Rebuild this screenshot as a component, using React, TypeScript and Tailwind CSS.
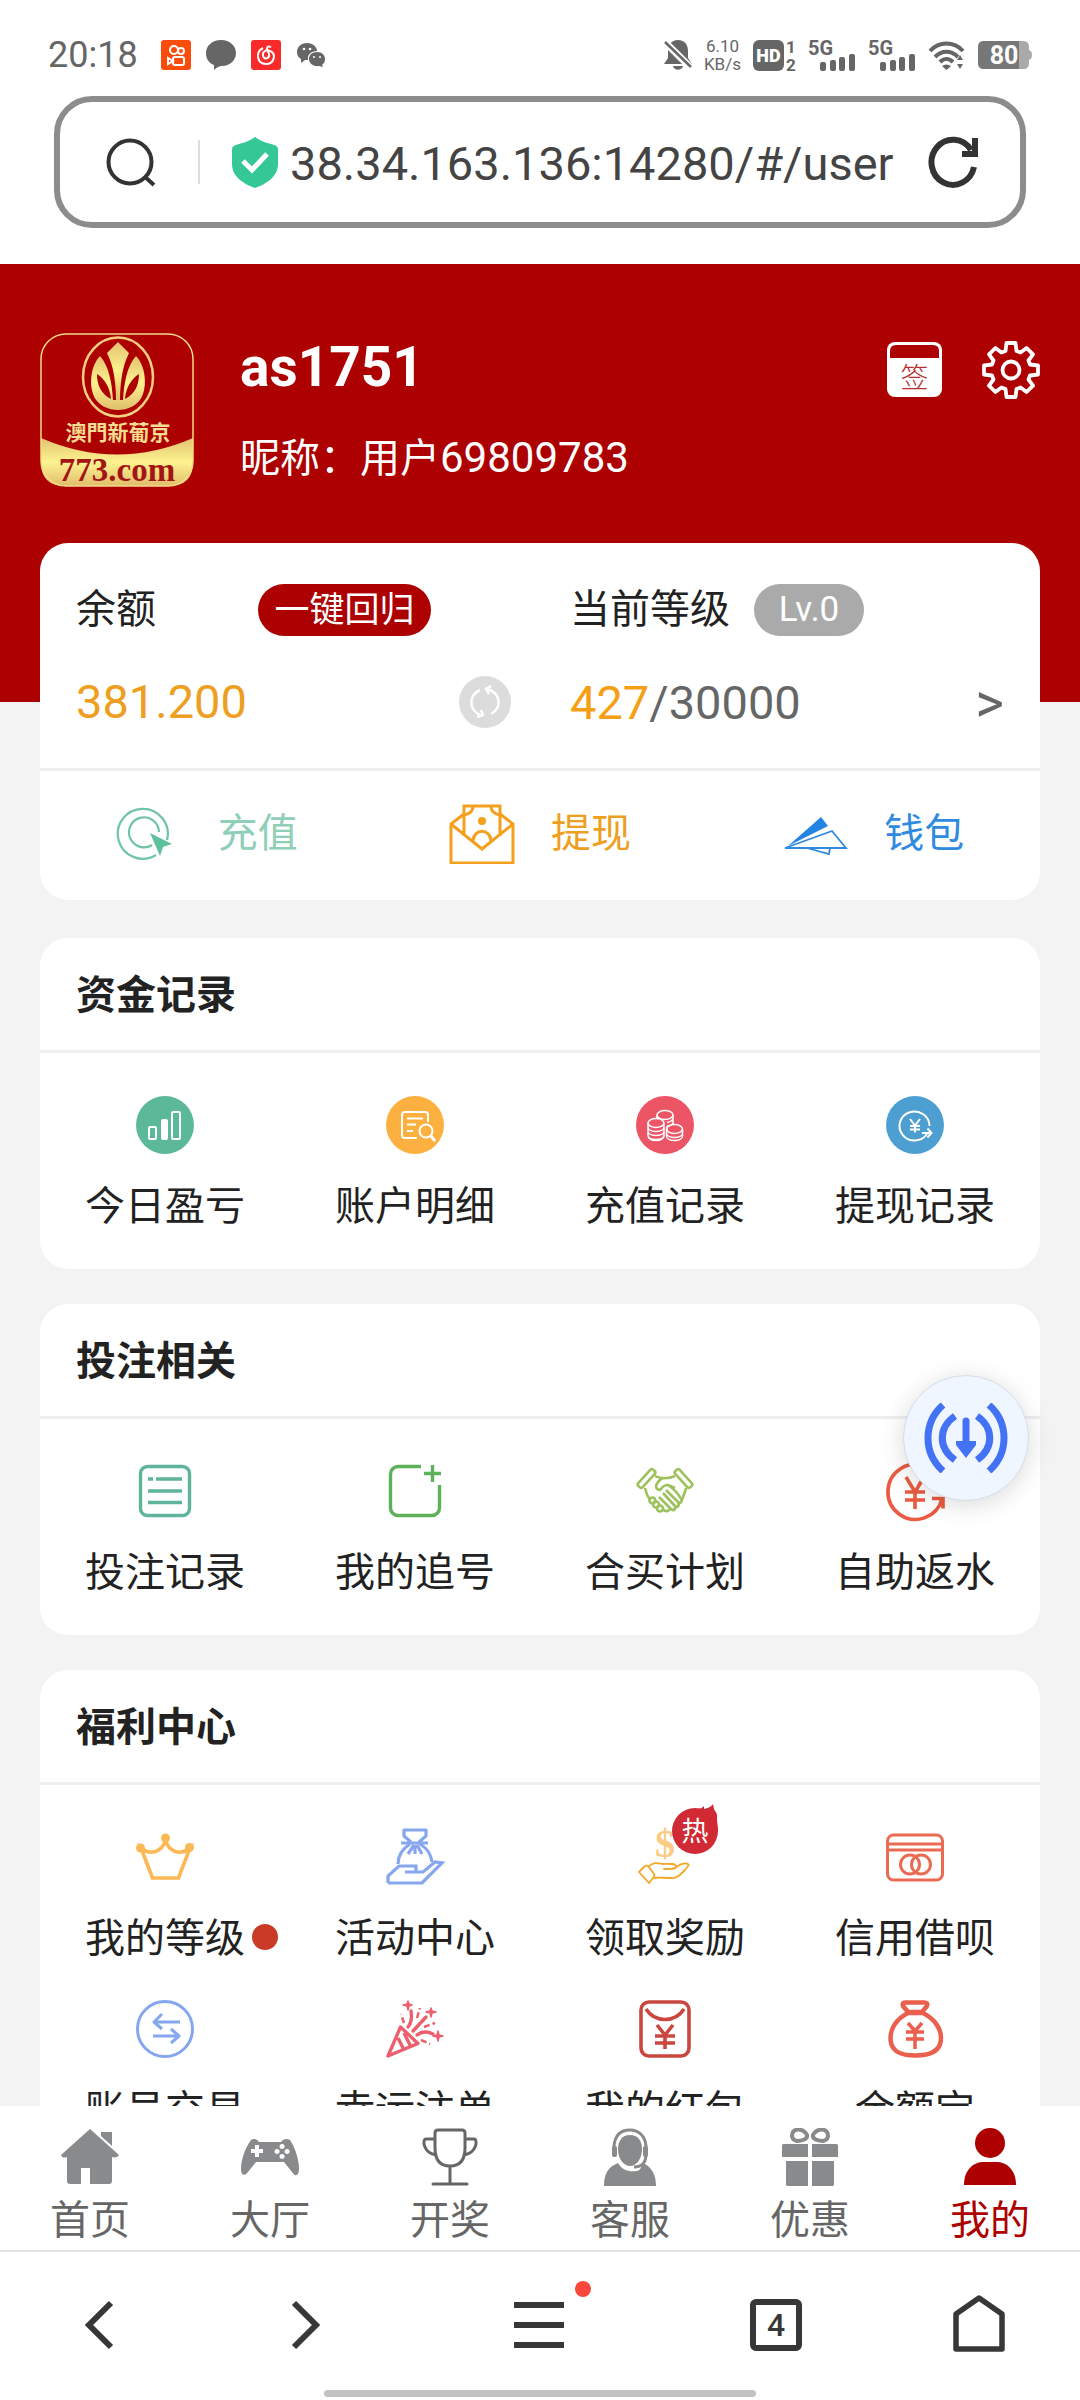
import React from "react";

type IconProps = {
    children: React.ReactNode;
    color?: string;
    className?: string;
    width?: number;
};

type MenuItem = {
    label: string;
    icon: React.ReactNode;
    dot?: boolean;
    hot?: boolean;
};

// All line icons of the menu share a 58 x 58 canvas
const LineIcon: React.FC<IconProps> = ({ children, color, className = "size-[58px] overflow-visible", width = 3 }: IconProps) => (
    <svg
        viewBox="0 0 58 58"
        className={className}
        fill="none"
        stroke={color}
        strokeWidth={width}
        strokeLinejoin="round"
        aria-hidden="true"
    >
        {children}
    </svg>
);

const DiscIcon: React.FC<IconProps> = ({ children, color }: IconProps) => (
    <svg viewBox="0 0 58 58" className="size-[58px]" fill="none" stroke="#fff" strokeWidth="2" aria-hidden="true">
        <circle cx="29" cy="29" r="29" fill={color} stroke="none" />
        {children}
    </svg>
);

const fundItems: Array<MenuItem> = [
    {
        label: "今日盈亏",
        icon: (
            <DiscIcon color="#5bb99a">
                <rect x="13" y="31" width="7" height="12" rx="1" />
                <rect x="25" y="23" width="7" height="21" rx="2" fill="#fff" stroke="none" />
                <rect x="36" y="16" width="8" height="27" rx="1" />
            </DiscIcon>
        ),
    },
    {
        label: "账户明细",
        icon: (
            <DiscIcon color="#fbb03f">
                <path d="M42 26V19a3 3 0 0 0-3-3H19a3 3 0 0 0-3 3v20a3 3 0 0 0 3 3h12M21 22.5h16M21 28.5h9M21 35h6" />
                <circle cx="40" cy="35" r="6.5" />
                <path d="M45 40l4 5" strokeWidth="3" />
            </DiscIcon>
        ),
    },
    {
        label: "充值记录",
        icon: (
            <DiscIcon color="#ec5565">
                <g strokeWidth="1.5">
                    <ellipse cx="29" cy="19" rx="8" ry="4.5" />
                    <path d="M21 19v4M37 19v10M37 23c-1 2-3 3-6 3.5M37 27c-1 2-3 3-6 3" />
                    <ellipse cx="20" cy="27" rx="8" ry="4.5" />
                    <path d="M12 27v13c0 6 16 6 16 0V27M12 31c0 6 16 6 16 0M12 35c0 6 16 6 16 0M12 39c0 6 16 6 16 0" />
                    <ellipse cx="38.5" cy="33" rx="8" ry="4.5" />
                    <path d="M30.5 33v7c0 6 16 6 16 0v-7M30.5 37c0 6 16 6 16 0M31 30v4" />
                </g>
            </DiscIcon>
        ),
    },
    {
        label: "提现记录",
        icon: (
            <DiscIcon color="#4d9fd2">
                <path d="M41 38a15 14.5 0 1 1 2.5-8M36 37h9M41.5 32.5l4 4.5-4 4.5M24 23l5 6.5 5-6.5M29 29.5v7M24 30h10M24 33.5h10" />
            </DiscIcon>
        ),
    },
];

const betItems: Array<MenuItem> = [
    {
        label: "投注记录",
        icon: (
            <LineIcon color="#5fb59b" width={3.4}>
                <rect x="4.5" y="4.5" width="49" height="49" rx="7" />
                <path d="M12 17h5M20 17h26M12 29h34M12 40.5h34" />
            </LineIcon>
        ),
    },
    {
        label: "我的追号",
        icon: (
            <LineIcon color="#5fb05a" width={3.4}>
                <path d="M35 4.5H12a7.500 7.500 0 0 0-7.500 7.500v34a7.500 7.500 0 0 0 7.500 7.500h34a7.500 7.500 0 0 0 7.500-7.500V23M46.500 3v17M38 11.500h17" />
            </LineIcon>
        ),
    },
    {
        label: "合买计划",
        icon: (
            <LineIcon color="#9dc25b" width={2.6}>
                <rect x="7.5" y="5.5" width="6" height="22" rx="2" transform="rotate(42 10.5 16.5)" />
                <rect x="44.5" y="5.5" width="6" height="22" rx="2" transform="rotate(-42 47.5 16.5)" />
                <path d="M19 14c5 3 14 3 20 0M9 26c1 5 2 8 5 12M50 26c-1 5-3 8-4 12" />
                <path d="M27 16c-4 2-6 5-7 8 0 3 3 5 5 3 2-3 4-4 7-4l7 3M32 23c3 2 10 8 13 14 2 3-1 5-3 3L30 28M42 40c2 4-1 6-3 4L27 31M39 44c1 4-2 5-4 3L23 35M34 46c-1 4-5 4-7 1" />
                <circle cx="16.5" cy="38.5" r="3" />
                <circle cx="20" cy="42.5" r="3" />
                <circle cx="24" cy="46.5" r="3" />
            </LineIcon>
        ),
    },
    {
        label: "自助返水",
        icon: (
            <LineIcon color="#ea5b42" width={3.6}>
                <path d="M56 37A27.5 27.5 0 1 1 56.5 25M46 36.5h11v10M20 15l9 15 9-15M29 30v17M19 30h20M19 38h20" strokeLinejoin="miter" />
            </LineIcon>
        ),
    },
];

const welfareItems: Array<MenuItem> = [
    {
        label: "我的等级",
        dot: true,
        icon: (
            <LineIcon color="#fbb955" width={3.6}>
                <path d="M5 20l11.500 30h26L54 20c-10 8-21 4-24.500-8C26 24 15 28 5 20z" strokeLinejoin="miter" />
                <g fill="#fbb955" stroke="none">
                    <circle cx="4.5" cy="20" r="4.5" />
                    <circle cx="29.5" cy="10" r="4.5" />
                    <circle cx="53.5" cy="19.5" r="4.5" />
                </g>
            </LineIcon>
        ),
    },
    {
        label: "活动中心",
        icon: (
            <LineIcon color="#86a6ee" width={3.2}>
                <path d="M25 14L18 8V2h22v6l-7 6M15 15h27M24 16c-8 5-12 11-12 20M34 16c8 5 11 10 12 18M28 17l-6 9M29 17v9M31 17l5 9" />
                <path d="M2 55v-7l11-10h17v6H19M30 44h7l12-10 7 1-20 20H2" strokeLinejoin="miter" />
            </LineIcon>
        ),
    },
    {
        label: "领取奖励",
        hot: true,
        icon: (
            <LineIcon color="#f5a623" width={1.8}>
                <text x="29" y="29" textAnchor="middle" fill="#fbcb85" stroke="none" className="[font-family:'Liberation_Serif',serif] text-[40px] font-bold">
                    $
                </text>
                <path d="M3 44l6-6c2-1 3 0 4 1l5 7c1 2 0 3-1 4l-4 5zM13 38c6-4 8-3 14-2 6 0 12-1 13 2s-4 3-12 3h7c6 0 9-8 17-5 2 1-1 3-3 6-5 5-9 9-14 8-8 0-12-1-17 0" />
            </LineIcon>
        ),
    },
    {
        label: "信用借呗",
        icon: (
            <LineIcon color="#ea6a52">
                <rect x="1.5" y="7" width="55" height="45" rx="6" />
                <path d="M1.5 16h55M1.5 22h55" />
                <circle cx="24" cy="36.5" r="9.5" />
                <circle cx="35" cy="36.5" r="9.5" />
            </LineIcon>
        ),
    },
    {
        label: "账号交易",
        icon: (
            <LineIcon color="#86a6ee">
                <circle cx="29" cy="29" r="27.5" />
                <path d="M44 22H18M26 14l-8 8 8 7M17 36h26M35 29l8 7-8 7" />
            </LineIcon>
        ),
    },
    {
        label: "幸运注单",
        icon: (
            <LineIcon color="#ec5f6e" width={3.4}>
                <path d="M14.500 27L2 56l30-12.500zM12 38l5 10M18 33l6 12" />
                <path d="M22 27c4-5 4-10 3-16M27 31l13-14M31 35c5-4 10-4 16-1" strokeLinecap="round" />
                <path d="M18 23l-3-9M31 18l3-10M38 27l11-4M35 40l9 4" strokeDasharray="6 3" strokeWidth="2.5" />
                <g fill="#ec5f6e" strokeWidth="1.5">
                    <path d="M22 1l1 3 3 1-3 1-1 4-1-4-4-1 4-1zM45 8l1 3 4 1-4 1-1 4-1-4-4-1 4-1zM52 31l1 4 4 1-4 1-1 4-1-4-4-1 4-1z" />
                </g>
            </LineIcon>
        ),
    },
    {
        label: "我的红包",
        icon: (
            <LineIcon color="#c9473f" width={3.6}>
                <rect x="5" y="2" width="48" height="54" rx="8" />
                <path d="M10 9c9 14 29 14 38 0M21 25l8 10 8-10M29 35v14M19 36h20M19 43h20" />
            </LineIcon>
        ),
    },
    {
        label: "余额宝",
        icon: (
            <LineIcon color="#ea5f4e" width={4.5}>
                <path d="M22 12l-5-6c-1-3 1-3.5 3-3.5h18c3 0 4 1 3 3.5l-5 6z" />
                <path d="M22 13C10 19 4.500 29 4.500 38c0 12 8 17.500 25 17.500S55 50 55 38c0-9-6-19-18-25z" />
                <path d="M22 23l7 8 7-8M29 31v18M20 32h18M20 39h18" strokeWidth="3.5" />
            </LineIcon>
        ),
    },
];

const tabs = [
    {
        label: "首页",
        icon: (
            <>
                <path d="M29 1L0 27c1 3 4 3 6 2v24c0 2 1 3 3 3h11V40h9v16h19c2 0 3-1 3-3V29c3 1 6 0 7-2z" />
                <path d="M40 4h11v14L40 8z" />
            </>
        ),
    },
    {
        label: "大厅",
        icon: (
            <path
                fillRule="evenodd"
                d="M10 12c3-2 6-1 8 2h22c2-3 6-4 9-2 6 9 9 21 9 29 0 7-4 8-7 3l-8-10H15L7 44c-4 5-7 3-7-3 0-9 4-21 10-29zM14 17v4h-4v4h4v4h4v-4h4v-4h-4v-4zM41 16a2.5 2.5 0 1 0 .1 0zM36 21a2.5 2.5 0 1 0 .1 0zM46 21a2.5 2.5 0 1 0 .1 0zM41 26a2.5 2.5 0 1 0 .1 0z"
            />
        ),
    },
    {
        label: "开奖",
        icon: (
            <path
                d="M14 5c0-2 1-3 3-3h24c2 0 3 1 3 3v15c0 12-5 18-15 18S14 32 14 20zM14 11H5c-4 0-3 14 10 16M44 11h9c4 0 3 14-10 16M29 38v18M12 56h34"
                fill="none"
                stroke="#666"
                strokeWidth="3"
                strokeLinecap="round"
            />
        ),
    },
    {
        label: "客服",
        icon: (
            <>
                <path d="M29 7c8 0 12 6 12 14 0 9-5 17-12 17s-12-8-12-17c0-8 4-14 12-14z" />
                <path d="M13 26V18C14 7 20 2 29 2s15 6 16 16v8c0 9-4 13-12 13" fill="none" stroke="#888a8c" strokeWidth="3" />
                <rect x="11" y="18" width="5" height="11" rx="2" />
                <rect x="42" y="18" width="5" height="11" rx="2" />
                <path d="M3 58c0-12 4-19 14-23 4 7 10 9 19 8 4-1 4-4 6-8 9 4 13 12 13 23z" />
            </>
        ),
    },
    {
        label: "优惠",
        icon: (
            <>
                <path d="M1 18c0-2 1-2 2-2h24v13H1zM31 16h24c2 0 2 1 2 2v11H31zM5 33h22v25H7c-2 0-2-1-2-2zM31 33h22v23c0 2-1 2-2 2H31z" />
                <path d="M26 7c1 4-5 6-10 6-5-1-6-5-4-9 3-4 11-3 14 3zM32 7c-1 4 5 6 10 6 5-1 6-5 4-9-3-4-11-3-14 3z" fill="none" stroke="#888a8c" strokeWidth="4" />
            </>
        ),
    },
    {
        label: "我的",
        active: true,
        icon: (
            <>
                <circle cx="29" cy="15" r="15" />
                <path d="M3 57c0-15 9-23 20-23h12c11 0 20 8 20 23z" />
            </>
        ),
    },
];

const SignalBars = () => (
    <svg viewBox="0 0 48 31" className="h-[31px] w-12 overflow-visible" aria-hidden="true">
        <text x="0" y="15" fill="#666" className="text-[20px] font-bold">
            5G
        </text>
        <g fill="#666">
            <rect x="12" y="22" width="6" height="9" rx="2" />
            <rect x="22" y="20" width="6" height="11" rx="2" />
            <rect x="31" y="17" width="6" height="14" rx="2" />
            <rect x="41" y="14" width="6" height="17" rx="2" />
        </g>
    </svg>
);

const StatusBar = () => (
    <div className="flex h-24 items-center justify-between px-12 pt-[14px] text-[#666]">
        <div className="flex items-center gap-[15px]">
            <span className="mr-2 text-[36px]">20:18</span>
            <svg viewBox="0 0 30 30" className="size-[30px]" fill="none" stroke="#fff" strokeWidth="2" aria-hidden="true">
                <rect width="30" height="30" rx="3" fill="#fb4c0b" stroke="none" />
                <circle cx="13" cy="10" r="4" />
                <circle cx="20" cy="11" r="3" />
                <rect x="12" y="17" width="11" height="8" rx="2" />
                <path d="M12 21l-5-3v6z" />
            </svg>
            <svg viewBox="0 0 30 30" className="size-[30px]" fill="#666" aria-hidden="true">
                <path d="M15 0c9 0 15 6 15 13s-6 13-14 13c-3 0-6 2-8 4v-5C3 23 0 19 0 13 0 6 6 0 15 0z" />
            </svg>
            <svg viewBox="0 0 30 30" className="size-[30px]" fill="none" stroke="#fff" strokeWidth="2" aria-hidden="true">
                <rect width="30" height="30" rx="3" fill="#f92a2a" stroke="none" />
                <path d="M12 8c-8 4-6 16 3 16 8 0 11-10 4-13-4-2-8 1-7 5s7 3 6-2l-2-5c0-3 2-3 4-2" />
            </svg>
            <svg viewBox="0 0 30 30" className="size-[30px]" fill="#666" aria-hidden="true">
                <path d="M11 3c6 0 10 4 10 8-6 0-10 4-9 9H9l-4 3v-4C2 17 1 15 1 12c0-5 4-9 10-9z" />
                <path d="M21 12c5 0 8 3 8 7 0 3-1 4-3 6l1 2-4-1c-6 1-10-3-10-7s3-7 8-7z" />
                <g fill="#fff">
                    <circle cx="8" cy="9" r="1.3" />
                    <circle cx="14" cy="9" r="1.3" />
                    <circle cx="18" cy="17" r="1" />
                    <circle cx="24" cy="17" r="1" />
                </g>
            </svg>
        </div>
        <div className="flex items-center gap-3">
            <svg viewBox="0 0 28 30" className="h-[30px] w-7" aria-hidden="true">
                <path d="M14 0c7 0 10 5 10 11v7l4 6H0l4-6v-7C4 5 7 0 14 0zM9 26h10c-1 5-9 5-10 0z" fill="#666" />
                <path d="M-1 0l29 29" stroke="#fff" strokeWidth="7" />
                <path d="M1 2l26 25" stroke="#666" strokeWidth="2.5" />
            </svg>
            <div className="text-center text-[17px] leading-[18px]">
                <div>6.10</div>
                <div>KB/s</div>
            </div>
            <svg viewBox="0 0 43 31" className="h-[31px] w-[43px] overflow-visible" aria-hidden="true">
                <rect width="31" height="31" rx="6" fill="#666" />
                <text x="15.500" y="22" textAnchor="middle" fill="#fff" className="text-[18px] font-black">
                    HD
                </text>
                <g fill="#666" className="text-[17px] font-bold">
                    <text x="33" y="13">1</text>
                    <text x="33" y="31">2</text>
                </g>
            </svg>
            <SignalBars />
            <SignalBars />
            <svg viewBox="0 0 38 30" className="h-[30px] w-[38px]" fill="none" stroke="#666" strokeWidth="4" aria-hidden="true">
                <path d="M2 11C11 1 26 1 35 11M7 17c7-7 16-7 23 0M12 22c4-4 9-4 13 0" />
                <path d="M14 26c3-2 6-2 9 0l-4.500 4zM29 20l3-5 3 5zM29 24l3 5 3-5z" fill="#666" stroke="none" />
            </svg>
            <svg viewBox="0 0 54 28" className="h-7 w-[54px] overflow-visible" aria-hidden="true">
                <path d="M41 0h4c4 0 6 2 6 6v3c4 1 4 9 0 10v3c0 4-2 6-6 6h-4z" fill="#aaa" />
                <path d="M6 0h35v28H6c-4 0-6-2-6-6V6c0-4 2-6 6-6z" fill="#777" />
                <text x="26" y="23" textAnchor="middle" fill="#fff" className="text-[25px] font-bold">
                    80
                </text>
            </svg>
        </div>
    </div>
);

const AddressBar = () => (
    <div className="mx-[54px] mb-9 flex h-[132px] items-center rounded-[38px] border-6 border-[#8c8c8c] pr-[42px] pl-[46px]">
        <button type="button" aria-label="搜索">
            <svg viewBox="0 0 50 50" className="size-[50px]" fill="none" stroke="#333" strokeWidth="4" aria-hidden="true">
                <circle cx="24" cy="25" r="21.5" />
                <path d="M38 39l10 9" />
            </svg>
        </button>
        <div className="mr-8 ml-[42px] h-11 w-0.5 bg-[#ddd]" />
        <svg viewBox="0 0 46 52" className="h-[52px] w-[46px]" aria-hidden="true">
            <path d="M23 1c7 5 13 6 19 8 3 1 4 2 4 5v14c0 13-12 20-23 24C12 48 0 41 0 28V14c0-3 1-4 4-5 6-2 12-3 19-8z" fill="#36c796" />
            <path d="M11 25l9 9 15-16" fill="none" stroke="#fff" strokeWidth="5" />
        </svg>
        <input
            type="text"
            aria-label="网址"
            defaultValue="38.34.163.136:14280/#/user"
            className="ml-3 h-16 min-w-0 flex-1 bg-transparent pt-1 text-[47px] text-[#444] outline-none"
        />
        <button type="button" aria-label="刷新">
            <svg viewBox="0 0 50 52" className="h-[52px] w-[50px]" fill="none" stroke="#333" strokeWidth="6" aria-hidden="true">
                <path d="M46 31A21.500 22.500 0 1 1 43 14" />
                <path d="M34 18h13V2" />
            </svg>
        </button>
    </div>
);

const Logo = () => (
    <svg viewBox="0 0 154 154" className="size-[154px] shrink-0" role="img" aria-label="澳门新葡京 773.com">
        <defs>
            <linearGradient id="gold" x1="0" y1="0" x2="0" y2="1">
                <stop offset="0" stopColor="#e3c270" />
                <stop offset="0.5" stopColor="#fdf38f" />
                <stop offset="1" stopColor="#e0bd6c" />
            </linearGradient>
        </defs>
        <path d="M1 105q76 33 152 0v24q0 24-24 24H25q-24 0-24-24z" fill="url(#gold)" />
        <rect x="1" y="1" width="152" height="152" rx="25" fill="none" stroke="#f2dc84" strokeWidth="1.5" />
        <ellipse cx="78" cy="44" rx="35" ry="39.5" fill="none" stroke="#f2cf80" strokeWidth="2.5" />
        <g fill="url(#gold)">
            <path d="M60 23c-9 9-11 27-7 38 4 12 16 16 25 16s21-4 25-16c4-11 2-29-7-38-9 10-12 27-13 44H73c-1-17-4-34-13-44z" />
            <path d="M78 9l11 11-3 7c-4 10-6 26-6 40h-4c0-14-2-30-6-40l-3-7z" />
        </g>
        <path d="M57 41c0 11 4 20 14 25-1-11-6-20-14-25zM99 41c0 11-4 20-14 25 1-11 6-20 14-25z" fill="#ad0000" />
        <text x="78" y="107" textAnchor="middle" fill="#f8dc90" className="[font-family:'Liberation_Serif','Noto_Sans_CJK_TC',serif] text-[21px] font-bold">
            澳門新葡京
        </text>
        <text x="77" y="148" textAnchor="middle" fill="#a31515" className="[font-family:'Liberation_Serif',serif] text-[33px] font-bold">
            773.com
        </text>
    </svg>
);

const ProfileHeader = () => (
    <header className="flex bg-[#ad0000] px-10 pt-[69px] pb-[215px] text-white">
        <Logo />
        <div className="ml-[46px] flex flex-1 flex-col justify-between pt-0.5">
            <h1 className="text-[55px] leading-16 font-bold">as1751</h1>
            <p className="text-[40px] leading-14">
                昵称：用户<span className="text-[42px]">69809783</span>
            </p>
        </div>
        <div className="mt-2 flex items-start gap-10">
            <button type="button" aria-label="签到" className="mt-px">
                <svg viewBox="0 0 55 55" className="size-[55px]" aria-hidden="true">
                    <rect width="55" height="55" rx="8" fill="#fff" />
                    <path d="M3 16V9q0-6 6-6h37q6 0 6 6v7z" fill="#ad0000" />
                    <text x="27.500" y="46" textAnchor="middle" fill="#b93030" className="text-[28px] font-light">
                        签
                    </text>
                </svg>
            </button>
            <button type="button" aria-label="设置">
                <svg viewBox="-29 -29 58 58" className="size-[58px]" fill="none" stroke="#fff" strokeWidth="3.8" strokeLinejoin="round" aria-hidden="true">
                    <circle r="8.500" />
                    <path d="M-5.500-19L-4.500-27H4.500L5.500-19 9.500-17.500 15.600-22 22-15.600 17.500-9.500 19-5.500 27-4.500V4.500L19 5.500 17.500 9.500 22 15.600 15.600 22 9.500 17.500 5.500 19 4.500 27H-4.500L-5.500 19-9.500 17.500-15.600 22-22 15.600-17.500 9.500-19 5.500-27 4.500V-4.500L-19-5.500-17.500-9.500-22-15.600-15.600-22-9.500-17.500z" />
                </svg>
            </button>
        </div>
    </header>
);

const BalanceCard = () => (
    <section className="relative mx-10 -mt-[159px] mb-[38px] rounded-[28px] bg-white">
        <div className="grid grid-cols-[530fr_470fr] gap-y-9 border-b-3 border-[#eee] pt-[41px] pb-9">
            <div className="flex h-13 items-center pl-9">
                <span className="text-[40px] text-[#222]">余额</span>
                <button type="button" className="ml-[102px] h-13 w-[173px] rounded-full bg-[#ad0000] text-[35px] leading-none text-white">
                    一键回归
                </button>
            </div>
            <div className="flex h-13 items-center gap-6">
                <span className="text-[40px] text-[#222]">当前等级</span>
                <span className="flex h-13 w-[110px] items-center justify-center rounded-full bg-[#aaa] text-[35px] text-white">Lv.0</span>
            </div>
            <div className="flex h-15 items-center justify-between pr-[59px] pl-9">
                <span className="text-[47px] text-[#ee9f22]">381.200</span>
                <button type="button" aria-label="刷新余额">
                    <svg viewBox="0 0 52 52" className="size-13" fill="none" stroke="#fff" strokeWidth="2.5" aria-hidden="true">
                        <circle cx="26" cy="26" r="26" fill="#dcdcdc" stroke="none" />
                        <path d="M21 14c-11 5-12 19 0 25M18 41l6-2-2-5M32 38c11-6 10-20-3-25M32 10l-5 3 3 5" />
                    </svg>
                </button>
            </div>
            <div className="flex h-15 items-center justify-between pt-0.5 pr-9 text-[47px] text-[#666]">
                <span>
                    <span className="text-[#f59f14]">427</span>/30000
                </span>
                <a href="#level" aria-label="等级详情" className="text-[55px] leading-none">
                    &gt;
                </a>
            </div>
        </div>
        <div className="grid h-[129px] grid-cols-3 pb-1 text-[40px]">
            <a href="#recharge" className="flex items-center justify-center gap-9 text-[#8fcfb8]">
                <svg viewBox="0 0 66 60" className="h-15 w-[66px]" fill="none" stroke="#6fc4a5" strokeWidth="2.2" aria-hidden="true">
                    <path d="M51 36A25 25 0 1 0 40 51" />
                    <path d="M43 28A15 15 0 1 0 36 41" />
                    <path d="M34 29l22 11-9 3-3 9z" fill="#5fc09c" stroke="none" />
                </svg>
                充值
            </a>
            <a href="#withdraw" className="flex items-center justify-center gap-9 text-[#ee9f22]">
                <svg viewBox="0 0 66 60" className="h-15 w-[66px]" fill="none" stroke="#f2a01d" strokeWidth="3" aria-hidden="true">
                    <path d="M15 32V2h36v30M15 10L2 20v39h62V20L51 10M2 20l31 25 31-25" />
                    <path d="M24 2c0 5-3 8-9 9M42 2c0 5 3 8 9 9M24 37c1-13 17-13 18 0" />
                    <circle cx="33" cy="17" r="4" fill="#f2a01d" stroke="none" />
                </svg>
                提现
            </a>
            <a href="#wallet" className="flex items-center justify-center gap-9 text-[#2f8ae0]">
                <svg viewBox="0 0 66 60" className="h-15 w-[66px]" fill="none" stroke="#2f8ae0" strokeWidth="1.8" aria-hidden="true">
                    <path d="M6 42L39 13l7 9z" fill="#2484e4" stroke="none" />
                    <path d="M3 44l47-17 14 17zM25 44l22 6 1-6" />
                </svg>
                钱包
            </a>
        </div>
    </section>
);

type MenuCardProps = {
    title: string;
    items: Array<MenuItem>;
};

const MenuCard: React.FC<MenuCardProps> = ({ title, items }: MenuCardProps) => (
    <section className="mx-10 mb-[35px] rounded-[28px] bg-white pb-8 text-[#222]">
        <h2 className="flex h-[115px] items-center border-b-3 border-[#eee] pt-1 pl-9 text-[40px] font-bold">{title}</h2>
        <div className="grid grid-cols-4 gap-y-[31px] pt-[43px]">
            {items.map((item) => (
                <a key={item.label} href="#menu" className="flex flex-col items-center gap-[23px]">
                    <span className="relative block h-[58px]">
                        {item.icon}
                        {item.hot && (
                            <span className="absolute -top-6 left-9">
                                <svg viewBox="0 0 46 50" className="h-[50px] w-[46px]" aria-hidden="true">
                                    <circle cx="23" cy="27" r="23" fill="#d02a35" />
                                    <path d="M24 5c3 0 5 0 8-3v3c4-1 7-2 9-5 1 5 1 6 3 8l1 3v4l1 12z" fill="#d02a35" />
                                    <text x="23" y="37" textAnchor="middle" fill="#fff" className="text-[27px]">
                                        热
                                    </text>
                                </svg>
                            </span>
                        )}
                    </span>
                    <span className="relative text-[40px] leading-15">
                        {item.label}
                        {item.dot && <span className="absolute top-[15px] left-full ml-[7px] size-[26px] rounded-full bg-[#c93a27]" />}
                    </span>
                </a>
            ))}
        </div>
    </section>
);

const FloatingButton = () => (
    <button
        type="button"
        aria-label="下载"
        className="absolute top-[1111px] right-[51px] flex size-[126px] items-center justify-center rounded-full border border-[#d5dde8] bg-[#f0f6ff] shadow-[0_4px_24px_rgba(0,0,0,0.15)]"
    >
        <svg viewBox="0 0 84 70" className="h-[70px] w-21" fill="none" stroke="#4372f5" strokeWidth="7" aria-hidden="true">
            <path d="M19 2C-1 20-1 50 19 68M65 2c20 18 20 48 0 66M31 13c-17 12-17 32 0 44M53 13c17 12 17 32 0 44" />
            <path d="M42 18v26" strokeLinecap="round" />
            <path d="M32 38h20v4L42 55 32 42z" fill="#4372f5" stroke="none" />
        </svg>
    </button>
);

const TabBar = () => (
    <nav className="grid h-36 shrink-0 grid-cols-6 bg-white pt-[22px]">
        {tabs.map((tab) => (
            <a
                key={tab.label}
                href="#tab"
                className={`flex flex-col items-center gap-[7px] text-[40px] leading-14 ${tab.active ? "text-[#ad0000]" : "text-[#666]"}`}
            >
                <svg viewBox="0 0 58 58" className="size-[58px]" fill={tab.active ? "#ad0000" : "#888a8c"} aria-hidden="true">
                    {tab.icon}
                </svg>
                {tab.label}
            </a>
        ))}
    </nav>
);

const BrowserBar = () => (
    <div className="shrink-0 border-t-2 border-[#e2e2e2] bg-white pb-[3px]">
        <div className="grid h-[138px] grid-cols-[198fr_216fr_250fr_224fr_182fr_10fr] items-center justify-items-center pt-[7px]">
            <button type="button" aria-label="后退">
                <svg viewBox="0 0 52 52" className="size-13" fill="none" stroke="#373737" strokeWidth="6" aria-hidden="true">
                    <path d="M38 4L16 26l22 22" />
                </svg>
            </button>
            <button type="button" aria-label="前进">
                <svg viewBox="0 0 52 52" className="size-13" fill="none" stroke="#373737" strokeWidth="6" aria-hidden="true">
                    <path d="M14 4l22 22-22 22" />
                </svg>
            </button>
            <button type="button" aria-label="菜单" className="relative">
                <svg viewBox="0 0 52 52" className="size-13" stroke="#373737" strokeWidth="6" aria-hidden="true">
                    <path d="M1 6h50M1 26h50M1 46h50" />
                </svg>
                <span className="absolute -top-[18px] -right-[26px] size-4 rounded-full bg-[#fb483c]" />
            </button>
            <button
                type="button"
                aria-label="标签页"
                className="flex size-13 items-center justify-center rounded-md border-6 border-[#373737] text-[32px] leading-none font-medium text-[#373737]"
            >
                4
            </button>
            <button type="button" aria-label="主页">
                <svg viewBox="0 0 52 58" className="mb-1 h-[58px] w-13" fill="none" stroke="#373737" strokeWidth="5.5" strokeLinejoin="round" aria-hidden="true">
                    <path d="M3 20L26 4l23 16v35H3z" />
                </svg>
            </button>
        </div>
        <div className="mx-auto h-[7px] w-2/5 rounded-full bg-[#c2c2c2]" />
    </div>
);

const App = () => (
    <div className="flex h-screen flex-col bg-white [font-family:Roboto,'Noto_Sans_CJK_SC',sans-serif]">
        <StatusBar />
        <AddressBar />
        <main className="relative min-h-0 flex-1 overflow-y-auto bg-[#f3f3f3] [scrollbar-width:none]">
            <ProfileHeader />
            <BalanceCard />
            <MenuCard title="资金记录" items={fundItems} />
            <MenuCard title="投注相关" items={betItems} />
            <MenuCard title="福利中心" items={welfareItems} />
            <FloatingButton />
        </main>
        <TabBar />
        <BrowserBar />
    </div>
);

export default App;
